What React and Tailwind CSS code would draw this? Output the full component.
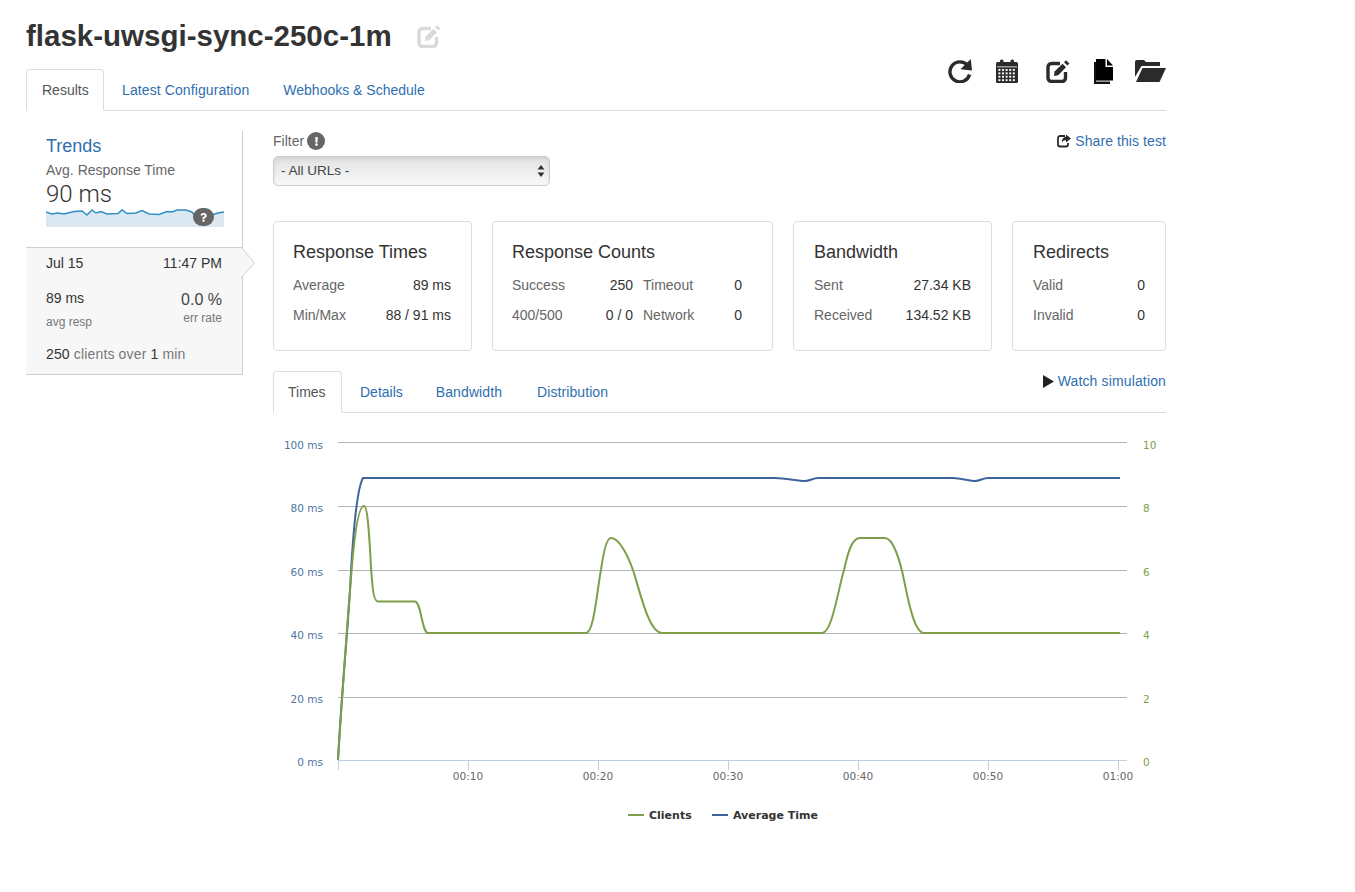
import { FaQuestion, FaExclamation } from 'react-icons/fa';

const RefreshIcon = () => (
    <svg width="24" height="24" viewBox="0 0 24 24" fill="none">
        <path d="M19.6 6.4 A10 10 0 1 0 21.6 15.5" stroke="#2b2b2b" strokeWidth="3.4" />
        <path d="M22.8 0 L24 11.5 L12.5 10.2 Z" fill="#2b2b2b" />
    </svg>
);

const CalendarIcon = () => (
    <svg width="22" height="24" viewBox="0 0 22 24" fill="#2b2b2b">
        <rect x="0" y="3" width="22" height="21" rx="1.5" />
        <rect x="4" y="0.5" width="3.5" height="5" rx="1.5" />
        <rect x="14.5" y="0.5" width="3.5" height="5" rx="1.5" />
        <rect x="1" y="7.5" width="20" height="0.8" fill="#fff" />
        {[10, 13.4, 16.8, 20.2].map((y) =>
            [2.4, 6, 9.6, 13.2, 16.8].map((x) => <rect key={`${x}-${y}`} x={x} y={y} width="2" height="1.9" fill="#fff" />)
        )}
    </svg>
);

const EditIcon = ({ className = '' }) => (
    <svg width="24" height="24" viewBox="0 0 24 24" fill="none" className={className}>
        <path d="M14 4.5 H5.5 A3.5 3.5 0 0 0 2 8 V19 A3.5 3.5 0 0 0 5.5 22.5 H16 A3.5 3.5 0 0 0 19.5 19 V13" stroke="currentColor" strokeWidth="3.4" />
        <path d="M8 17 L8.6 12.6 L16.5 4.8 L20 8.2 L12.2 16.2 Z" fill="currentColor" />
        <path d="M18 3.2 L20 1.2 L23.4 4.6 L21.4 6.6 Z" fill="currentColor" />
    </svg>
);

const FilesIcon = () => (
    <svg width="19" height="25" viewBox="0 0 19 25">
        <path d="M0 3 H2 V23 H16 V25 H0 Z" fill="#111" />
        <path d="M2 21.5 H16 V23 H2 Z" fill="#999" />
        <path d="M2 0 H11.5 V8 H19 V21.5 H2 Z" fill="#000" />
        <path d="M13 0 L19 6.5 H13 Z" fill="#000" />
    </svg>
);

const FolderIcon = () => (
    <svg width="31" height="22" viewBox="0 0 31 22" fill="#2b2b2b">
        <path d="M0 2 Q0 0 2 0 H9 L11 2 H25 V6 H6.5 L0 17 Z" />
        <path d="M7.5 8 H31 L24.5 22 H1 Z" />
    </svg>
);

const ShareIcon = () => (
    <svg width="14" height="14" viewBox="0 0 14 14" fill="none" className="mr-[4px]">
        <path d="M8 2 H3 A2 2 0 0 0 1 4 V10.5 A2 2 0 0 0 3 12.5 H9 A2 2 0 0 0 11 10.5 V9" stroke="#2b2b2b" strokeWidth="1.8" />
        <path d="M9 0.5 L14 4.5 L9 8.5 V6.2 Q6 6 4.8 8.6 Q4.8 3.2 9 2.8 Z" fill="#2b2b2b" />
    </svg>
);

const Tab = ({ label, active, className = '' }) => (
    <div
        className={`flex items-center px-[15px] h-[42px] -mb-px rounded-t border ${active
            ? 'bg-white border-[#ddd] border-b-white text-[#555]'
            : 'border-transparent text-[#2f6fb0]'} ${className}`}
    >
        {label}
    </div>
);

const Stat = ({ label, value, className = '' }) => (
    <div className={`flex justify-between ${className}`}>
        <span className="text-[#666]">{label}</span>
        <span className="text-[#333]">{value}</span>
    </div>
);

const Card = ({ title, className = '', children }) => (
    <div className={`h-[130px] rounded border border-[#ddd] bg-white pt-[18px] ${className}`}>
        <h3 className="text-lg leading-[24px] text-[#333] mb-[6px]">{title}</h3>
        <div className="text-sm leading-[30px]">{children}</div>
    </div>
);

const sparkPoints = 'M0 9 L6 11 L12 10 L18 11 L28 8.5 L36 8 L41 12 L46 7 L50 10 L55 8.5 L61 11 L72 10.5 L76 7 L81 10.5 L90 10 L96 7.5 L103 11 L113 11.5 L121 8.5 L126 9 L131 7 L140 7 L146 9 L150 14 L160 14 L166 12 L172 10 L178 9';

const Sparkline = () => (
    <div className="relative h-[24px] w-[178px] -mt-[4px]">
        <svg width="178" height="24" viewBox="0 0 178 24" className="block">
            <path d={`${sparkPoints} V24 H0 Z`} fill="#dbe8f2" />
            <path d={sparkPoints} fill="none" stroke="#2f8fc4" strokeWidth="1.5" />
        </svg>
        <div className="absolute left-[147px] top-[5px] w-[21px] h-[18px] rounded-full bg-[#666] flex items-center justify-center text-white">
            <FaQuestion size={9} />
        </div>
    </div>
);

const leftLabels = [
    ['100 ms', 443],
    ['80 ms', 506],
    ['60 ms', 570],
    ['40 ms', 633],
    ['20 ms', 697],
    ['0 ms', 760],
];
const rightLabels = [
    ['10', 443],
    ['8', 506],
    ['6', 570],
    ['4', 633],
    ['2', 697],
    ['0', 760],
];
const xLabels = [
    ['00:10', 468],
    ['00:20', 598],
    ['00:30', 728],
    ['00:40', 858],
    ['00:50', 988],
    ['01:00', 1118],
];

// chart coords are page coords, the viewBox starts at the svg's place on the page
const Chart = () => (
    <svg width="893" height="400" viewBox="273 430 893 400" className="block mt-[17px]" style={{ fontFamily: '"DejaVu Sans", sans-serif' }}>
        {[442.5, 506.5, 570.5, 633.5, 697.5].map((y) => (
            <line key={y} x1="338" x2="1127" y1={y} y2={y} stroke="#b3b3b3" />
        ))}
        <line x1="338" x2="1127" y1="760.5" y2="760.5" stroke="#c0d0e0" />
        {[338.5, 468.5, 598.5, 728.5, 858.5, 988.5, 1118.5].map((x) => (
            <line key={x} x1={x} x2={x} y1="760" y2="770" stroke="#c0d0e0" />
        ))}
        {leftLabels.map(([t, y]) => (
            <text key={t} x="323" y={y + 6} textAnchor="end" fontSize="10.5" fill="#4d759e">{t}</text>
        ))}
        {rightLabels.map(([t, y]) => (
            <text key={t} x="1143" y={y + 6} fontSize="10.5" fill="#7f9e4a">{t}</text>
        ))}
        {xLabels.map(([t, x]) => (
            <text key={t} x={x} y="780" textAnchor="middle" fontSize="10.5" fill="#666">{t}</text>
        ))}
        <path
            d="M338 760 C341 700 347 640 350 590 C352 550 356 490 363 478 H775 C785 478 798 481 805 481 C810 481 813 478 818 478 H953 C960 478 970 481 975 481 C980 481 983 478 988 478 H1120"
            fill="none"
            stroke="#3d659c"
            strokeWidth="2"
        />
        <path
            d="M338 760 C345 650 350 590 352 565 C355 530 359 506 364 506 C369 506 370 560 372 580 C373 595 375 601.5 378 601.5 H415 C421 601.5 422 633 428 633 H586 C594 633 597 590 601 570 C604 548 607 538 611 538 C619 538 628 555 634 573 C642 600 650 633 662 633 H822 C832 633 838 590 844 570 C848 552 852 538 860 538 H885 C893 538 900 560 904 580 C909 605 915 633 924 633 H1120"
            fill="none"
            stroke="#7f9e4a"
            strokeWidth="2"
        />
        <line x1="628" x2="644" y1="815" y2="815" stroke="#7f9e4a" strokeWidth="2" />
        <text x="649" y="819" fontSize="11" fontWeight="bold" fill="#333">Clients</text>
        <line x1="712" x2="728" y1="815" y2="815" stroke="#3d659c" strokeWidth="2" />
        <text x="733" y="819" fontSize="11" fontWeight="bold" fill="#333">Average Time</text>
    </svg>
);

export default function App() {
    return (
        <div className="w-[1355px] h-[892px] bg-white overflow-hidden text-sm text-[#333]" style={{ fontFamily: '"Liberation Sans", Arial, sans-serif' }}>
            <div className="w-[1140px] ml-[26px] pt-[18px]">
                <div className="flex items-center h-[36px]">
                    <h1 className="text-[29.5px] leading-[36px] font-bold text-[#333]">flask-uwsgi-sync-250c-1m</h1>
                    <EditIcon className="ml-[25px] text-[#d9d9d9]" />
                </div>

                <div className="relative mt-[16px] flex items-end h-[41px] border-b border-[#ddd]">
                    <Tab label="Results" active className="w-[78px]" />
                    <Tab label="Latest Configuration" className="ml-[2px] tracking-[0.1px]" />
                    <Tab label="Webhooks & Schedule" className="ml-[2px]" />
                    <div className="absolute right-0 top-[-12px] flex items-center h-[26px]">
                        <RefreshIcon />
                        <div className="ml-[24px]"><CalendarIcon /></div>
                        <EditIcon className="ml-[28px] text-[#2b2b2b]" />
                        <div className="ml-[24px]"><FilesIcon /></div>
                        <div className="ml-[22px]"><FolderIcon /></div>
                    </div>
                </div>

                <div className="flex mt-5">
                    <aside className="w-[217px] shrink-0">
                        <div className="h-[116px] border-r border-[#ccc] pl-5 pr-[18px] pt-1">
                            <div className="text-lg leading-[22px] text-[#2f6fb0]">Trends</div>
                            <div className="text-sm leading-[20px] text-[#666] mt-[3px]">Avg. Response Time</div>
                            <div className="font-['Roboto'] text-2xl leading-[26px] font-light text-[#333] mt-[1px]">90 ms</div>
                            <Sparkline />
                        </div>
                        <div className="relative h-[128px] bg-[#f7f7f7] border-y border-r border-[#d0d0d0] pl-5 pr-[20px]">
                            <div className="flex justify-between leading-[20px] mt-[5px] text-[#333]">
                                <span>Jul 15</span>
                                <span>11:47 PM</span>
                            </div>
                            <div className="flex justify-between mt-[15px]">
                                <div>
                                    <div className="leading-[20px]">89 ms</div>
                                    <div className="text-xs leading-[16px] mt-[6px] text-[#777]">avg resp</div>
                                </div>
                                <div className="text-right">
                                    <div className="text-base leading-[20px] mt-[2px] text-[#444]">0.0 %</div>
                                    <div className="text-xs leading-[16px] text-[#777]">err rate</div>
                                </div>
                            </div>
                            <div className="leading-[20px] mt-[14px] text-[#777] tracking-[0.15px]">
                                <span className="text-[#333]">250</span> clients over <span className="text-[#333]">1</span> min
                            </div>
                            <svg width="15" height="32" viewBox="0 0 15 32" className="absolute left-[calc(100%-1px)] -top-px">
                                <path d="M0 0 L13.5 16 L0 31 Z" fill="#f7f7f7" />
                                <path d="M0 0 L13.5 16 L0 31" fill="none" stroke="#d0d0d0" />
                            </svg>
                        </div>
                    </aside>

                    <main className="flex-1 ml-[30px]">
                        <div className="flex justify-between">
                            <div>
                                <div className="flex items-center h-[20px] text-[#666]">
                                    Filter
                                    <span className="ml-[3px] w-[18px] h-[18px] rounded-full bg-[#666] text-white flex items-center justify-center">
                                        <FaExclamation size={9} />
                                    </span>
                                </div>
                                <div className="relative mt-[5px] w-[277px] h-[30px] rounded-[5px] border border-[#ccc] bg-gradient-to-b from-[#e2e2e2] to-[#f8f8f8] shadow-[inset_0_2px_4px_rgba(0,0,0,0.08)] pl-[7px] flex items-center text-[13.5px] text-[#444]">
                                    - All URLs -
                                    <svg width="8" height="14" viewBox="0 0 8 14" className="absolute right-[4px] top-[7px]" fill="#333">
                                        <path d="M4 1 L7.5 5.5 H0.5 Z" />
                                        <path d="M4 13 L7.5 8.5 H0.5 Z" />
                                    </svg>
                                </div>
                            </div>
                            <div className="flex items-center h-[20px] text-[#2f6fb0] tracking-[0.08px]">
                                <ShareIcon />
                                Share this test
                            </div>
                        </div>

                        <div className="flex gap-5 mt-[35px]">
                            <Card title="Response Times" className="w-[199px] pl-[19px] pr-5">
                                <Stat label="Average" value="89 ms" />
                                <Stat label="Min/Max" value="88 / 91 ms" />
                            </Card>
                            <Card title="Response Counts" className="w-[281px] pl-[19px] pr-[30px]">
                                <div className="grid grid-cols-[121px_1fr] gap-x-[10px]">
                                    <Stat label="Success" value="250" />
                                    <Stat label="Timeout" value="0" />
                                    <Stat label="400/500" value="0 / 0" />
                                    <Stat label="Network" value="0" />
                                </div>
                            </Card>
                            <Card title="Bandwidth" className="w-[199px] px-5">
                                <Stat label="Sent" value="27.34 KB" />
                                <Stat label="Received" value="134.52 KB" />
                            </Card>
                            <Card title="Redirects" className="w-[154px] px-5">
                                <Stat label="Valid" value="0" />
                                <Stat label="Invalid" value="0" />
                            </Card>
                        </div>

                        <div className="relative flex items-end mt-5 h-[42px] border-b border-[#ddd]">
                            <Tab label="Times" active className="w-[69px] !pl-[14px]" />
                            <Tab label="Details" className="ml-[2px]" />
                            <Tab label="Bandwidth" className="ml-[1px] tracking-[0.1px]" />
                            <Tab label="Distribution" className="ml-[3px] tracking-[0.08px]" />
                            <div className="absolute right-0 top-0 flex items-center h-[20px] text-[#2f6fb0] tracking-[0.14px]">
                                <svg width="11" height="13" viewBox="0 0 11 13" className="mr-[4px]" fill="#222">
                                    <path d="M0 0 L11 6.5 L0 13 Z" />
                                </svg>
                                Watch simulation
                            </div>
                        </div>

                        <Chart />
                    </main>
                </div>
            </div>
        </div>
    );
}
